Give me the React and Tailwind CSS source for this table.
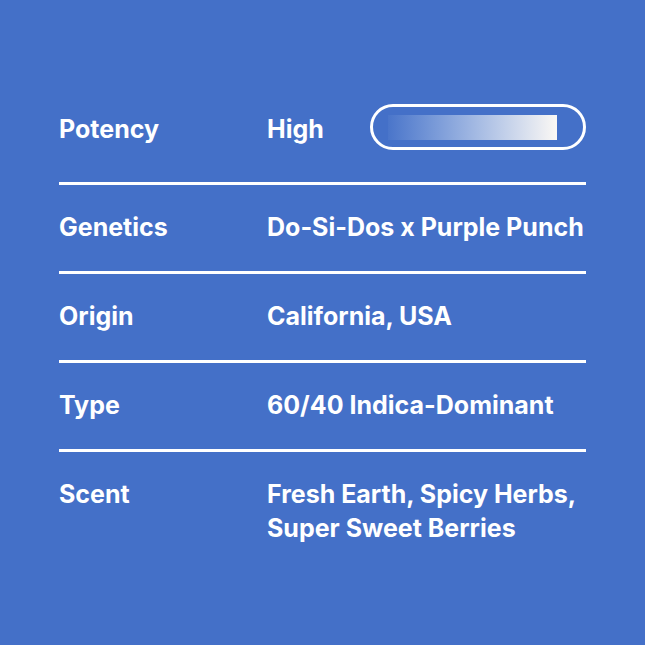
export default function App() {
  const rows = [
    ["Genetics", "Do-Si-Dos x Purple Punch"],
    ["Origin", "California, USA"],
    ["Type", "60/40 Indica-Dominant"],
    ["Scent", "Fresh Earth, Spicy Herbs, Super Sweet Berries"],
  ];
  return (
    <div
      className="w-[645px] h-[645px] bg-[#4470c8] text-white px-[59px] pt-[104px]"
      style={{ fontFamily: "Inter, 'Noto Sans', sans-serif" }}
    >
      <div className="flex items-center h-[46px] mb-[32px]">
        <div className="w-[208px] text-[25px] font-bold leading-[34px] mt-[3px]">Potency</div>
        <div className="w-[103px] text-[25px] font-bold leading-[34px] mt-[3px]">High</div>
        <div className="flex-1 h-[46px] rounded-full border-[3px] border-white flex items-center pl-[15px] pr-[26px]">
          <div className="h-[25px] w-full bg-gradient-to-r from-[#4a75ca] to-[#fbf8f4]" />
        </div>
      </div>
      {rows.map(([k, v]) => (
        <div key={k}>
          <div className="h-[3px] bg-white" />
          <div className="flex pt-[25px] pb-[27px]">
            <div className="w-[208px] text-[25px] font-bold leading-[34px]">{k}</div>
            <div className="flex-1 text-[25px] font-bold leading-[34px]">{v}</div>
          </div>
        </div>
      ))}
    </div>
  );
}
